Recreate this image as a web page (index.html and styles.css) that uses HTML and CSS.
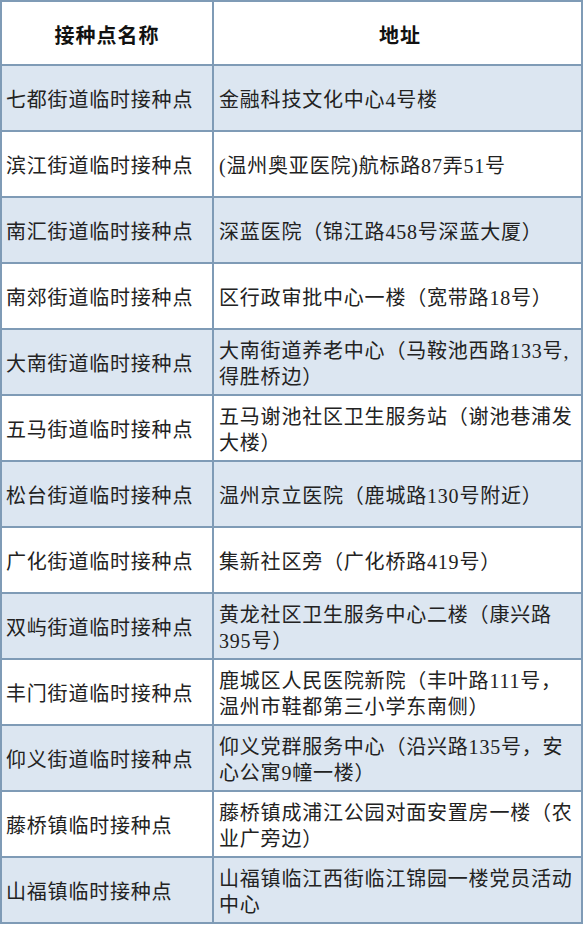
FILE: index.html
```html
<!DOCTYPE html>
<html lang="zh-CN">
<head>
<meta charset="utf-8">
<title>接种点</title>
<link rel="stylesheet" href="styles.css">
</head>
<body>
<div class="table">
  <div class="row head">
    <div class="cell name">接种点名称</div>
    <div class="cell addr">地址</div>
  </div>
  <div class="row blue">
    <div class="cell name">七都街道临时接种点</div>
    <div class="cell addr">金融科技文化中心4号楼</div>
  </div>
  <div class="row">
    <div class="cell name">滨江街道临时接种点</div>
    <div class="cell addr">(温州奥亚医院)航标路87弄51号</div>
  </div>
  <div class="row blue">
    <div class="cell name">南汇街道临时接种点</div>
    <div class="cell addr">深蓝医院（锦江路458号深蓝大厦）</div>
  </div>
  <div class="row">
    <div class="cell name">南郊街道临时接种点</div>
    <div class="cell addr">区行政审批中心一楼（宽带路18号）</div>
  </div>
  <div class="row blue">
    <div class="cell name">大南街道临时接种点</div>
    <div class="cell addr">大南街道养老中心（马鞍池西路133号,<br>得胜桥边）</div>
  </div>
  <div class="row">
    <div class="cell name">五马街道临时接种点</div>
    <div class="cell addr">五马谢池社区卫生服务站（谢池巷浦发<br>大楼）</div>
  </div>
  <div class="row blue">
    <div class="cell name">松台街道临时接种点</div>
    <div class="cell addr">温州京立医院（鹿城路130号附近）</div>
  </div>
  <div class="row">
    <div class="cell name">广化街道临时接种点</div>
    <div class="cell addr">集新社区旁（广化桥路419号）</div>
  </div>
  <div class="row blue">
    <div class="cell name">双屿街道临时接种点</div>
    <div class="cell addr">黄龙社区卫生服务中心二楼（康兴路<br>395号）</div>
  </div>
  <div class="row">
    <div class="cell name">丰门街道临时接种点</div>
    <div class="cell addr">鹿城区人民医院新院（丰叶路111号，<br>温州市鞋都第三小学东南侧）</div>
  </div>
  <div class="row blue">
    <div class="cell name">仰义街道临时接种点</div>
    <div class="cell addr">仰义党群服务中心（沿兴路135号，安<br>心公寓9幢一楼）</div>
  </div>
  <div class="row">
    <div class="cell name">藤桥镇临时接种点</div>
    <div class="cell addr">藤桥镇成浦江公园对面安置房一楼（农<br>业广旁边）</div>
  </div>
  <div class="row blue last">
    <div class="cell name">山福镇临时接种点</div>
    <div class="cell addr">山福镇临江西街临江锦园一楼党员活动<br>中心</div>
  </div>
</div>
</body>
</html>
```

FILE: styles.css
```css
html, body {
  margin: 0;
  padding: 0;
  background: #ffffff;
}

.table {
  width: 583px;
  box-sizing: border-box;
  border: 2px solid #7f9bb6;
  border-bottom: none;
  font-family: "Liberation Serif", "Noto Sans CJK SC", serif;
  font-size: 20px;
  letter-spacing: 0.8px;
  color: #222222;
}

.row {
  display: grid;
  grid-template-columns: 212px 1fr;
  height: 66px;
  box-sizing: border-box;
  border-bottom: 2px solid #7f9bb6;
  background: #ffffff;
}

.row.head {
  height: 64px;
}

.row.blue {
  background: #dce6f1;
}

.cell {
  display: flex;
  align-items: center;
  line-height: 26px;
  padding: 4px 4px 0 4px;
}

.cell.name {
  border-right: 2px solid #7f9bb6;
}

.cell.addr {
  padding-left: 5px;
  padding-right: 0;
}

.head .cell {
  justify-content: center;
  font-family: "Noto Sans CJK SC", sans-serif;
  font-weight: 700;
  letter-spacing: 1px;
  color: #111111;
}
```
